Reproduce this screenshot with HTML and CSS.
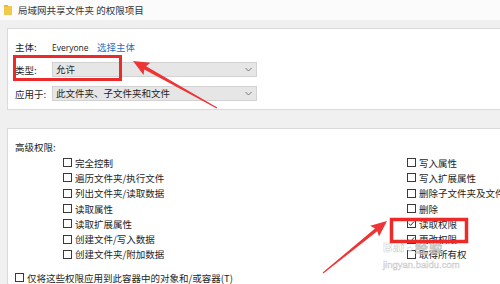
FILE: index.html
```html
<!DOCTYPE html>
<html lang="zh-CN">
<head>
<meta charset="utf-8">
<title>权限项目</title>
<link rel="stylesheet" href="styles.css">
</head>
<body>
<div class="titlebar">
  <svg class="folder" width="8" height="10" viewBox="0 0 8 10"><rect x="0" y="1" width="8" height="9" fill="#f2c94c"/><rect x="0" y="0" width="4" height="2" fill="#e8b93a"/></svg>
  <span class="title">局域网共享文件夹 的权限项目</span>
</div>
<div class="content">
  <div class="panel panel-top">
    <div class="row row-text">
      <span class="label">主体:</span>
      <span class="who">Everyone</span>
      <span class="link">选择主体</span>
    </div>
    <div class="row">
      <span class="label">类型:</span>
      <div class="select"><span>允许</span><svg class="chev" width="7" height="5" viewBox="0 0 7 5"><polyline points="0.5,1 3.5,4 6.5,1" fill="none" stroke="#777" stroke-width="1"/></svg></div>
    </div>
    <div class="row">
      <span class="label">应用于:</span>
      <div class="select"><span>此文件夹、子文件夹和文件</span><svg class="chev" width="7" height="5" viewBox="0 0 7 5"><polyline points="0.5,1 3.5,4 6.5,1" fill="none" stroke="#777" stroke-width="1"/></svg></div>
    </div>
  </div>
  <div class="panel panel-adv">
    <div class="heading">高级权限:</div>
    <div class="grid">
      <div class="col">
        <label class="cb"><span class="box"></span>完全控制</label>
        <label class="cb"><span class="box"></span>遍历文件夹/执行文件</label>
        <label class="cb"><span class="box"></span>列出文件夹/读取数据</label>
        <label class="cb"><span class="box"></span>读取属性</label>
        <label class="cb"><span class="box"></span>读取扩展属性</label>
        <label class="cb"><span class="box"></span>创建文件/写入数据</label>
        <label class="cb"><span class="box"></span>创建文件夹/附加数据</label>
      </div>
      <div class="col">
        <label class="cb"><span class="box"></span>写入属性</label>
        <label class="cb"><span class="box"></span>写入扩展属性</label>
        <label class="cb"><span class="box"></span>删除子文件夹及文件</label>
        <label class="cb"><span class="box"></span>删除</label>
        <label class="cb"><span class="box checked"><svg width="7" height="7" viewBox="0 0 7 7"><polyline points="0.8,3.6 2.6,5.4 6.2,1.4" fill="none" stroke="#333" stroke-width="1"/></svg></span>读取权限</label>
        <label class="cb"><span class="box checked"><svg width="7" height="7" viewBox="0 0 7 7"><polyline points="0.8,3.6 2.6,5.4 6.2,1.4" fill="none" stroke="#333" stroke-width="1"/></svg></span>更改权限</label>
        <label class="cb"><span class="box"></span>取得所有权</label>
      </div>
    </div>
    <label class="cb bottom"><span class="box"></span>仅将这些权限应用到此容器中的对象和/或容器(T)</label>
  </div>
</div>
<div class="watermark">
  <div class="wm-logo">Bai<span class="paw">●</span>经验</div>
  <div class="wm-url">jingyan.baidu.com</div>
</div>
<svg class="annot" width="500" height="284" viewBox="0 0 500 284">
  <rect x="14.5" y="56.5" width="106" height="23" fill="none" stroke="#ec2a2a" stroke-width="3"/>
  <rect x="391.5" y="219.5" width="75" height="22" fill="none" stroke="#ec2a2a" stroke-width="3.5"/>
  <polygon points="217.24,107.56 146.08,66.26 150.37,62.71 133,61 143.53,74.91 144.32,69.40 216.76,108.44" fill="#ee3434"/>
  <polygon points="323.32,273.39 377.28,231.23 379.0,236.52 387,221 370.16,225.66 375.0,228.43 322.68,272.61" fill="#ee3434"/>
</svg>
</body>
</html>
```
FILE: styles.css
```css
html, body {
  margin: 0;
  padding: 0;
}
body {
  width: 500px;
  height: 284px;
  overflow: hidden;
  position: relative;
  background: #f0f0f0;
  font-family: "Noto Sans CJK SC", "Microsoft YaHei", sans-serif;
  font-size: 9.5px;
  color: #1e1e1e;
}
.titlebar {
  height: 20px;
  background: #fbfbfb;
  display: flex;
  align-items: center;
  padding-left: 4px;
  gap: 6px;
  box-sizing: border-box;
}
.title {
  font-size: 9.5px;
  color: #333;
  line-height: 12px;
}
.content {
  padding: 8px 0 0 7px;
}
.panel {
  background: #fff;
  border: 1px solid #dadada;
  border-right: none;
  box-sizing: border-box;
}
.panel-top {
  height: 82px;
  padding: 12px 0 0 7px;
  display: flex;
  flex-direction: column;
  gap: 9px;
}
.row {
  display: flex;
  align-items: center;
  height: 15px;
}
.row-text {
  height: 12px;
}
.label {
  width: 37px;
  flex: none;
  line-height: 12px;
}
.who {
  font-family: "Open Sans", "Liberation Sans", sans-serif;
  font-size: 8.5px;
  width: 45px;
  color: #222;
}
.link {
  color: #1f6fc0;
}
.select {
  width: 205px;
  height: 15px;
  box-sizing: border-box;
  background: #e6e6e6;
  border: 1px solid #d2d2d2;
  display: flex;
  align-items: center;
  justify-content: space-between;
  padding: 0 4px 0 3px;
  line-height: 13px;
}
.chev {
  display: block;
}
.panel-adv {
  margin-top: 18px;
  height: 170px;
  padding: 12px 0 0 7px;
}
.heading {
  line-height: 12px;
}
.grid {
  display: grid;
  grid-template-columns: 344px auto;
  padding-left: 48px;
  margin-top: 2px;
}
.col {
  display: flex;
  flex-direction: column;
}
.cb {
  display: flex;
  align-items: center;
  gap: 3px;
  height: 15.3px;
  white-space: nowrap;
}
.box {
  width: 9px;
  height: 9px;
  box-sizing: border-box;
  border: 1px solid #3a3a3a;
  background: #fff;
  flex: none;
  display: flex;
  align-items: center;
  justify-content: center;
}
.box svg {
  display: block;
}
.bottom {
  margin-top: 8px;
}
.watermark {
  position: absolute;
  left: 383px;
  top: 241px;
  color: rgba(255, 255, 255, 0.75);
  -webkit-text-stroke: 0.5px rgba(150, 150, 150, 0.55);
  pointer-events: none;
}
.wm-logo {
  font-family: "Liberation Sans", sans-serif;
  font-weight: bold;
  font-size: 13px;
  line-height: 14px;
  letter-spacing: 0.5px;
}
.wm-logo .paw {
  font-size: 10px;
  margin: 0 2px;
}
.wm-url {
  font-family: "Liberation Sans", sans-serif;
  font-size: 9.5px;
  line-height: 12px;
  margin-top: 3px;
}
.annot {
  position: absolute;
  left: 0;
  top: 0;
  pointer-events: none;
}
```
